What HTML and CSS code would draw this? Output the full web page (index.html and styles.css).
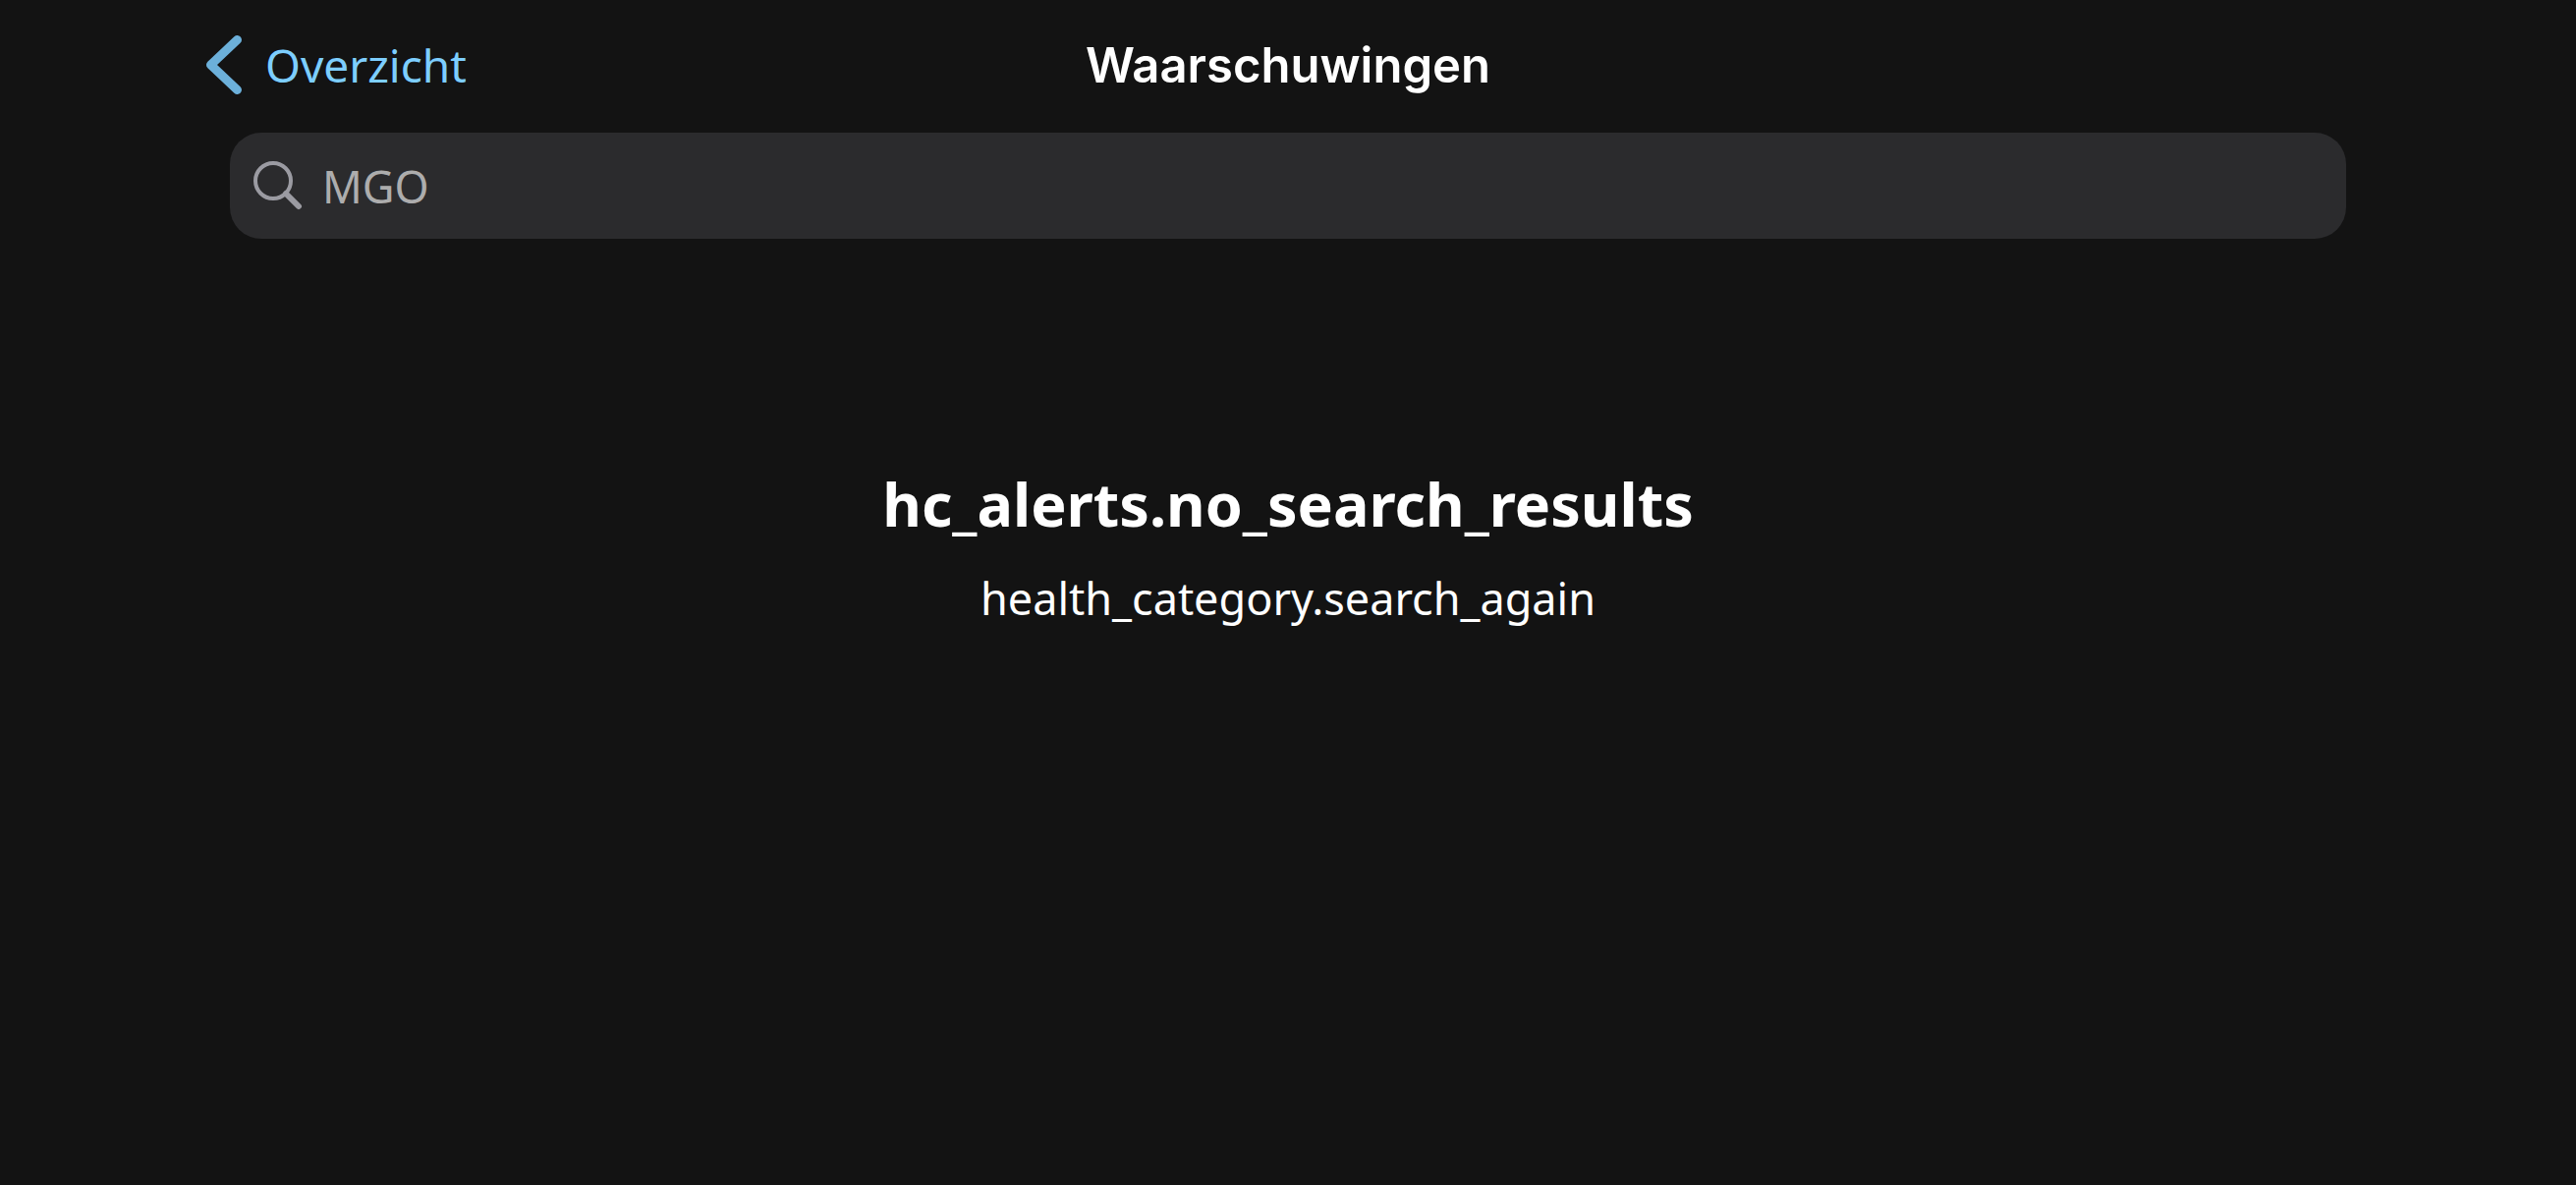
FILE: index.html
```html
<!DOCTYPE html>
<html lang="nl">
<head>
<meta charset="utf-8">
<meta name="viewport" content="width=device-width, initial-scale=1">
<title>Waarschuwingen</title>
<link rel="stylesheet" href="styles.css">
</head>
<body>
<header class="navbar">
  <a class="back" href="#overzicht">
    <svg class="back-icon" viewBox="0 0 38 60" aria-hidden="true"><path d="M33.500 4.500 6.500 30 33.500 55.500"/></svg>
    <span>Overzicht</span>
  </a>
  <h1 class="title">Waarschuwingen</h1>
</header>
<main class="content">
  <label class="search">
    <svg class="search-icon" viewBox="0 0 50 50" aria-hidden="true"><circle cx="20" cy="20" r="18"/><path class="handle" d="M33 33 46 46"/></svg>
    <input class="search-input" type="text" value="MGO" aria-label="Zoeken">
  </label>
  <section class="empty">
    <h2 class="empty-title">hc_alerts.no_search_results</h2>
    <p class="empty-text">health_category.search_again</p>
  </section>
</main>
</body>
</html>
```
FILE: styles.css
```css
* { box-sizing: border-box; }
body {
  margin: 0;
  min-height: 100vh;
  background: #131313;
  color: #fff;
  font-family: "Noto Sans", sans-serif;
}
.navbar {
  display: grid;
  grid-template-columns: 1fr auto 1fr;
  align-items: center;
  height: 132px;
  padding: 0 208px;
}
.back {
  display: flex;
  align-items: center;
  justify-self: start;
  gap: 24px;
  color: #7dceff;
  font-size: 46px;
  text-decoration: none;
}
.back-icon {
  width: 38px;
  height: 60px;
  fill: none;
  stroke: #6cb0da;
  stroke-width: 9;
  stroke-linecap: round;
  stroke-linejoin: round;
}
.title {
  margin: 0;
  font-family: Inter, sans-serif;
  font-size: 49px;
  font-weight: 600;
}
.content { padding: 3px 234px; }
.search {
  display: flex;
  align-items: center;
  gap: 20px;
  height: 108px;
  padding: 0 24px;
  border-radius: 32px;
  background: #2b2b2d;
}
.search-icon {
  width: 50px;
  height: 50px;
  fill: none;
  stroke: #9b9ba2;
  stroke-width: 4;
  stroke-linecap: round;
}
.search-icon .handle { stroke-width: 6; }
.search-input {
  flex: 1;
  min-width: 0;
  padding: 0;
  border: 0;
  outline: 0;
  background: none;
  color: #adadad;
  font: 45px "Noto Sans", sans-serif;
}
.empty {
  padding-top: 228px;
  text-align: center;
}
.empty-title {
  margin: 0 0 20px;
  font-size: 61px;
  line-height: 84px;
}
.empty-text {
  margin: 0;
  font-size: 45px;
  line-height: 68px;
}
```
